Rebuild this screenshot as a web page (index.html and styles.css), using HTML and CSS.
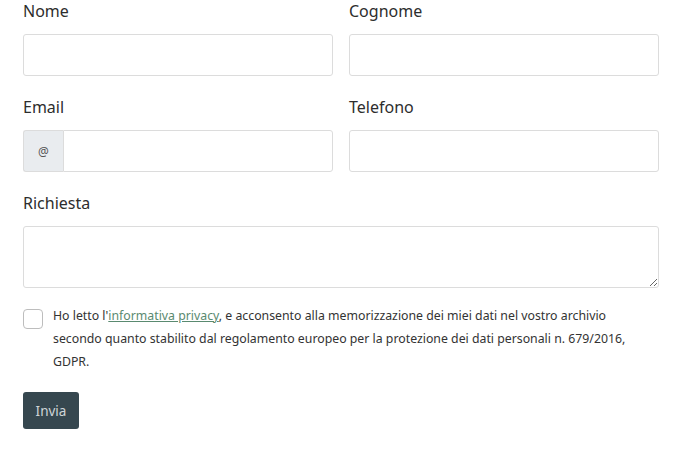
FILE: index.html
```html
<!DOCTYPE html>
<html lang="it">
<head>
  <meta charset="UTF-8" />
  <title>Contatti</title>
  <link rel="stylesheet" href="styles.css">
</head>
<body>
  <form class="contact-form">
    <!-- Nome / Cognome -->
    <div class="form-row">
      <div class="form-group">
        <label for="nome">Nome</label>
        <input type="text" id="nome" class="form-control" />
      </div>
      <div class="form-group">
        <label for="cognome">Cognome</label>
        <input type="text" id="cognome" class="form-control" />
      </div>
    </div>

    <!-- Email / Telefono -->
    <div class="form-row">
      <div class="form-group">
        <label for="email">Email</label>
        <div class="input-group">
          <span class="input-addon">@</span>
          <input type="email" id="email" class="form-control" />
        </div>
      </div>
      <div class="form-group">
        <label for="telefono">Telefono</label>
        <input type="text" id="telefono" class="form-control" />
      </div>
    </div>

    <div class="form-group">
      <label for="richiesta">Richiesta</label>
      <textarea id="richiesta" class="form-control textarea"></textarea>
    </div>

    <div class="privacy">
      <input type="checkbox" id="privacy" class="check" />
      <label for="privacy" class="privacy-text">Ho letto l'<a href="#">informativa privacy</a>, e acconsento alla memorizzazione dei miei dati nel vostro archivio secondo quanto stabilito dal regolamento europeo per la protezione dei dati personali n. 679/2016, GDPR.</label>
    </div>

    <button type="submit" class="btn">Invia</button>
  </form>
</body>
</html>
```

FILE: styles.css
```css
html, body {
  margin: 0;
  padding: 0;
  background: #fff;
  font-family: "Noto Sans", "Open Sans", sans-serif;
  color: #333;
}

.contact-form {
  width: 636px;
  margin-left: 23px;
  padding-top: 2px;
}

.form-row {
  display: flex;
  gap: 16px;
}
.form-row .form-group {
  flex: 1;
  min-width: 0;
}

.form-group {
  margin-bottom: 22px;
}

.form-group label {
  display: block;
  font-size: 16px;
  line-height: 18px;
  height: 18px;
  margin-bottom: 14px;
  color: #2d2d2d;
}

.form-control {
  display: block;
  box-sizing: border-box;
  width: 100%;
  height: 42px;
  margin: 0;
  padding: 6px 12px;
  border: 1px solid #dcdcdc;
  border-radius: 3px;
  background: #fff;
  font: inherit;
}

.textarea {
  height: 62px;
  resize: vertical;
}

.input-group {
  display: flex;
}
.input-addon {
  box-sizing: border-box;
  width: 40px;
  height: 42px;
  display: flex;
  align-items: center;
  justify-content: center;
  background: #e9ecef;
  border: 1px solid #dcdcdc;
  border-right: none;
  border-radius: 3px 0 0 3px;
  font-size: 12px;
  color: #555;
}
.input-group .form-control {
  flex: 1;
  border-radius: 0 3px 3px 0;
}

.privacy {
  display: flex;
  gap: 10px;
  margin-top: -6px;
}
.check {
  appearance: none;
  flex: none;
  width: 20px;
  height: 20px;
  margin: 5px 0 0;
  border: 1px solid #bdbdbd;
  border-radius: 4px;
  background: #fff;
}
.privacy-text {
  max-width: 590px;
  font-size: 12.3px;
  line-height: 23px;
  color: #333;
}
.privacy-text a {
  color: #5a8a70;
  text-decoration: underline;
}

.btn {
  display: block;
  margin-top: 19px;
  width: 56px;
  height: 37px;
  padding: 0;
  border: none;
  border-radius: 3px;
  background: #36474f;
  color: #cfd5d8;
  font-family: inherit;
  font-size: 13.5px;
  cursor: pointer;
}
```
